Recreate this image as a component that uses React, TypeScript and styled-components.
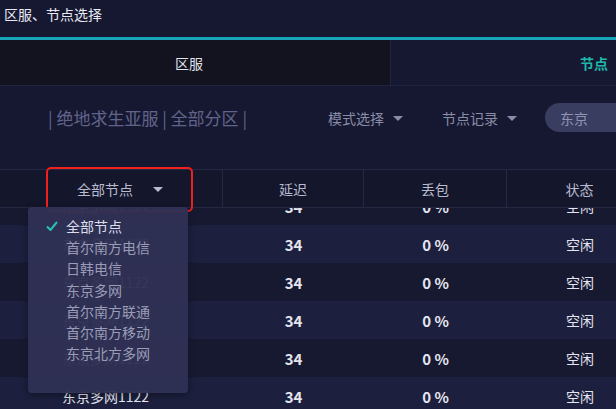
import React, { useLayoutEffect, useRef } from 'react'
import styled, { createGlobalStyle } from 'styled-components'

const GlobalStyle = createGlobalStyle`
    html, body {
        margin: 0;
        padding: 0;
        background: #161831;
        overflow: hidden;
    }
    body {
        font-family: "Noto Sans CJK SC", "Noto Sans", sans-serif;
    }
    #root {
        height: 409px;
    }
`

const Page = styled.div`
    display: flex;
    flex-direction: column;
    height: 409px;
    width: 616px;
    overflow: hidden;
    background: #161831;
`

const TitleBar = styled.div`
    height: 37px;
    padding-left: 4px;
    display: flex;
    align-items: center;
    font-size: 14px;
    color: #e8e9f2;
    border-bottom: 3px solid #17a6b9;
    & > span {
        margin-top: -10px;
    }
`

const Tabs = styled.div`
    display: flex;
    height: 45px;
    border-bottom: 1px solid #20223f;
`

const Tab = styled.div<{ $active?: boolean }>`
    display: flex;
    align-items: center;
    justify-content: center;
    font-size: 14px;
    width: ${p => (p.$active ? '391px' : 'auto')};
    flex: ${p => (p.$active ? 'none' : '1')};
    background: ${p => (p.$active ? '#12131e' : 'transparent')};
    color: ${p => (p.$active ? '#e2e3ec' : '#1fb8aa')};
    border-right: ${p => (p.$active ? '1px solid #23253a' : 'none')};
    padding-left: ${p => (p.$active ? '0' : '181px')};
    padding-right: ${p => (p.$active ? '12px' : '0')};
    box-sizing: border-box;
    font-weight: ${p => (p.$active ? 400 : 700)};
`

const Toolbar = styled.div`
    display: flex;
    align-items: center;
    height: 63px;
    padding-left: 48px;
    padding-bottom: 20px;
`

const Crumbs = styled.div`
    font-size: 17px;
    color: #61648a;
    width: 280px;
    flex: none;
`

const Select = styled.div<{ $gap: number }>`
    display: flex;
    align-items: center;
    gap: 9px;
    font-size: 14px;
    color: #8a8da8;
    margin-right: ${p => p.$gap}px;
`

const Caret = styled.span<{ $color?: string }>`
    width: 0;
    height: 0;
    border-left: 5px solid transparent;
    border-right: 5px solid transparent;
    border-top: 5px solid ${p => p.$color || '#8a8da8'};
    margin-top: 2px;
`

const Search = styled.div`
    height: 29px;
    flex: 1;
    margin-right: -30px;
    border-radius: 15px;
    background: #393e61;
    display: flex;
    align-items: center;
    padding-left: 15px;
    font-size: 14px;
    color: #8f94b4;
`

const Table = styled.div`
    position: relative;
    flex: 1;
    display: flex;
    flex-direction: column;
    min-height: 0;
`

const HeadRow = styled.div`
    display: flex;
    height: 37px;
    flex: none;
    background: #14162b;
    border-top: 1px solid #252842;
    border-bottom: 1px solid #252842;
    position: relative;
    z-index: 2;
`

const HeadCell = styled.div<{ $w: number; $first?: boolean }>`
    position: relative;
    width: ${p => p.$w}px;
    flex: none;
    display: flex;
    align-items: center;
    justify-content: center;
    gap: 20px;
    font-size: 14px;
    color: #b9bbcf;
    padding-left: ${p => (p.$first ? '18px' : '0')};
    box-sizing: border-box;
    border-right: 1px solid #252842;
`

const Highlight = styled.div`
    position: absolute;
    left: 46px;
    top: -3px;
    width: 147px;
    height: 45px;
    box-sizing: border-box;
    border: 2.5px solid #f0201c;
    border-radius: 5px;
    pointer-events: none;
`

const Body = styled.div`
    flex: 1;
    overflow: hidden;
`

const Row = styled.div<{ $alt: boolean }>`
    display: flex;
    height: 38px;
    align-items: center;
    background: ${p => (p.$alt ? '#1c1f3d' : '#171931')};
`

const Cell = styled.div<{ $w: number; $first?: boolean; $bold?: boolean }>`
    width: ${p => p.$w}px;
    flex: none;
    text-align: center;
    font-size: ${p => (p.$bold ? '15px' : '14px')};
    font-weight: ${p => (p.$bold ? 600 : 400)};
    color: #e4e5ee;
    padding-right: ${p => (p.$first ? '12px' : '0')};
    box-sizing: border-box;
`

const Dropdown = styled.div`
    position: absolute;
    left: 28px;
    top: 38px;
    width: 160px;
    height: 186px;
    z-index: 3;
    background: rgba(47, 49, 84, 0.97);
    border-radius: 4px;
    box-shadow: 0 2px 6px rgba(0, 0, 0, 0.35);
    padding-top: 9px;
    box-sizing: border-box;
`

const Option = styled.div<{ $selected?: boolean }>`
    position: relative;
    height: 21.2px;
    line-height: 21.2px;
    padding-left: 38px;
    font-size: 14px;
    color: ${p => (p.$selected ? '#dcdeec' : '#9b9db8')};
`

const Check = styled.svg`
    position: absolute;
    left: 18px;
    top: 5px;
`

const widths = [223, 141, 143, 146]

const options = ['全部节点', '首尔南方电信', '日韩电信', '东京多网', '首尔南方联通', '首尔南方移动', '东京北方多网']

const rows = Array.from({ length: 7 }, () => ({ name: '东京多网1122', ping: '34', loss: '0 %', state: '空闲' }))

const App: React.FunctionComponent = () => {
    const bodyRef = useRef<HTMLDivElement>(null)

    useLayoutEffect(() => {
        if (bodyRef.current) bodyRef.current.scrollTop = 21
    }, [])

    return (
        <Page>
            <GlobalStyle />
            <TitleBar><span>区服、节点选择</span></TitleBar>
            <Tabs>
                <Tab $active>区服</Tab>
                <Tab>节点</Tab>
            </Tabs>
            <Toolbar>
                <Crumbs>| 绝地求生亚服 | 全部分区 |</Crumbs>
                <Select $gap={39}>模式选择 <Caret /></Select>
                <Select $gap={28}>节点记录 <Caret /></Select>
                <Search>东京</Search>
            </Toolbar>
            <Table>
                <HeadRow>
                    <HeadCell $w={widths[0]} $first>
                        全部节点 <Caret $color='#b9bbcf' />
                        <Highlight />
                    </HeadCell>
                    <HeadCell $w={widths[1]}>延迟</HeadCell>
                    <HeadCell $w={widths[2]}>丢包</HeadCell>
                    <HeadCell $w={widths[3]}>状态</HeadCell>
                </HeadRow>
                <Body ref={bodyRef}>
                    {rows.map((r, i) =>
                        <Row key={i} $alt={i % 2 === 1}>
                            <Cell $w={widths[0]} $first>{r.name}</Cell>
                            <Cell $w={widths[1]} $bold>{r.ping}</Cell>
                            <Cell $w={widths[2]} $bold>{r.loss}</Cell>
                            <Cell $w={widths[3]}>{r.state}</Cell>
                        </Row>
                    )}
                </Body>
                <Dropdown>
                    {options.map((o, i) =>
                        <Option key={o} $selected={i === 0}>
                            {i === 0 &&
                                <Check width='12' height='10' viewBox='0 0 12 10'>
                                    <path d='M1 5.5 L4.5 9 L11 1' fill='none' stroke='#26c3b5' strokeWidth='2' />
                                </Check>
                            }
                            {o}
                        </Option>
                    )}
                </Dropdown>
            </Table>
        </Page>
    )
}

export default App
